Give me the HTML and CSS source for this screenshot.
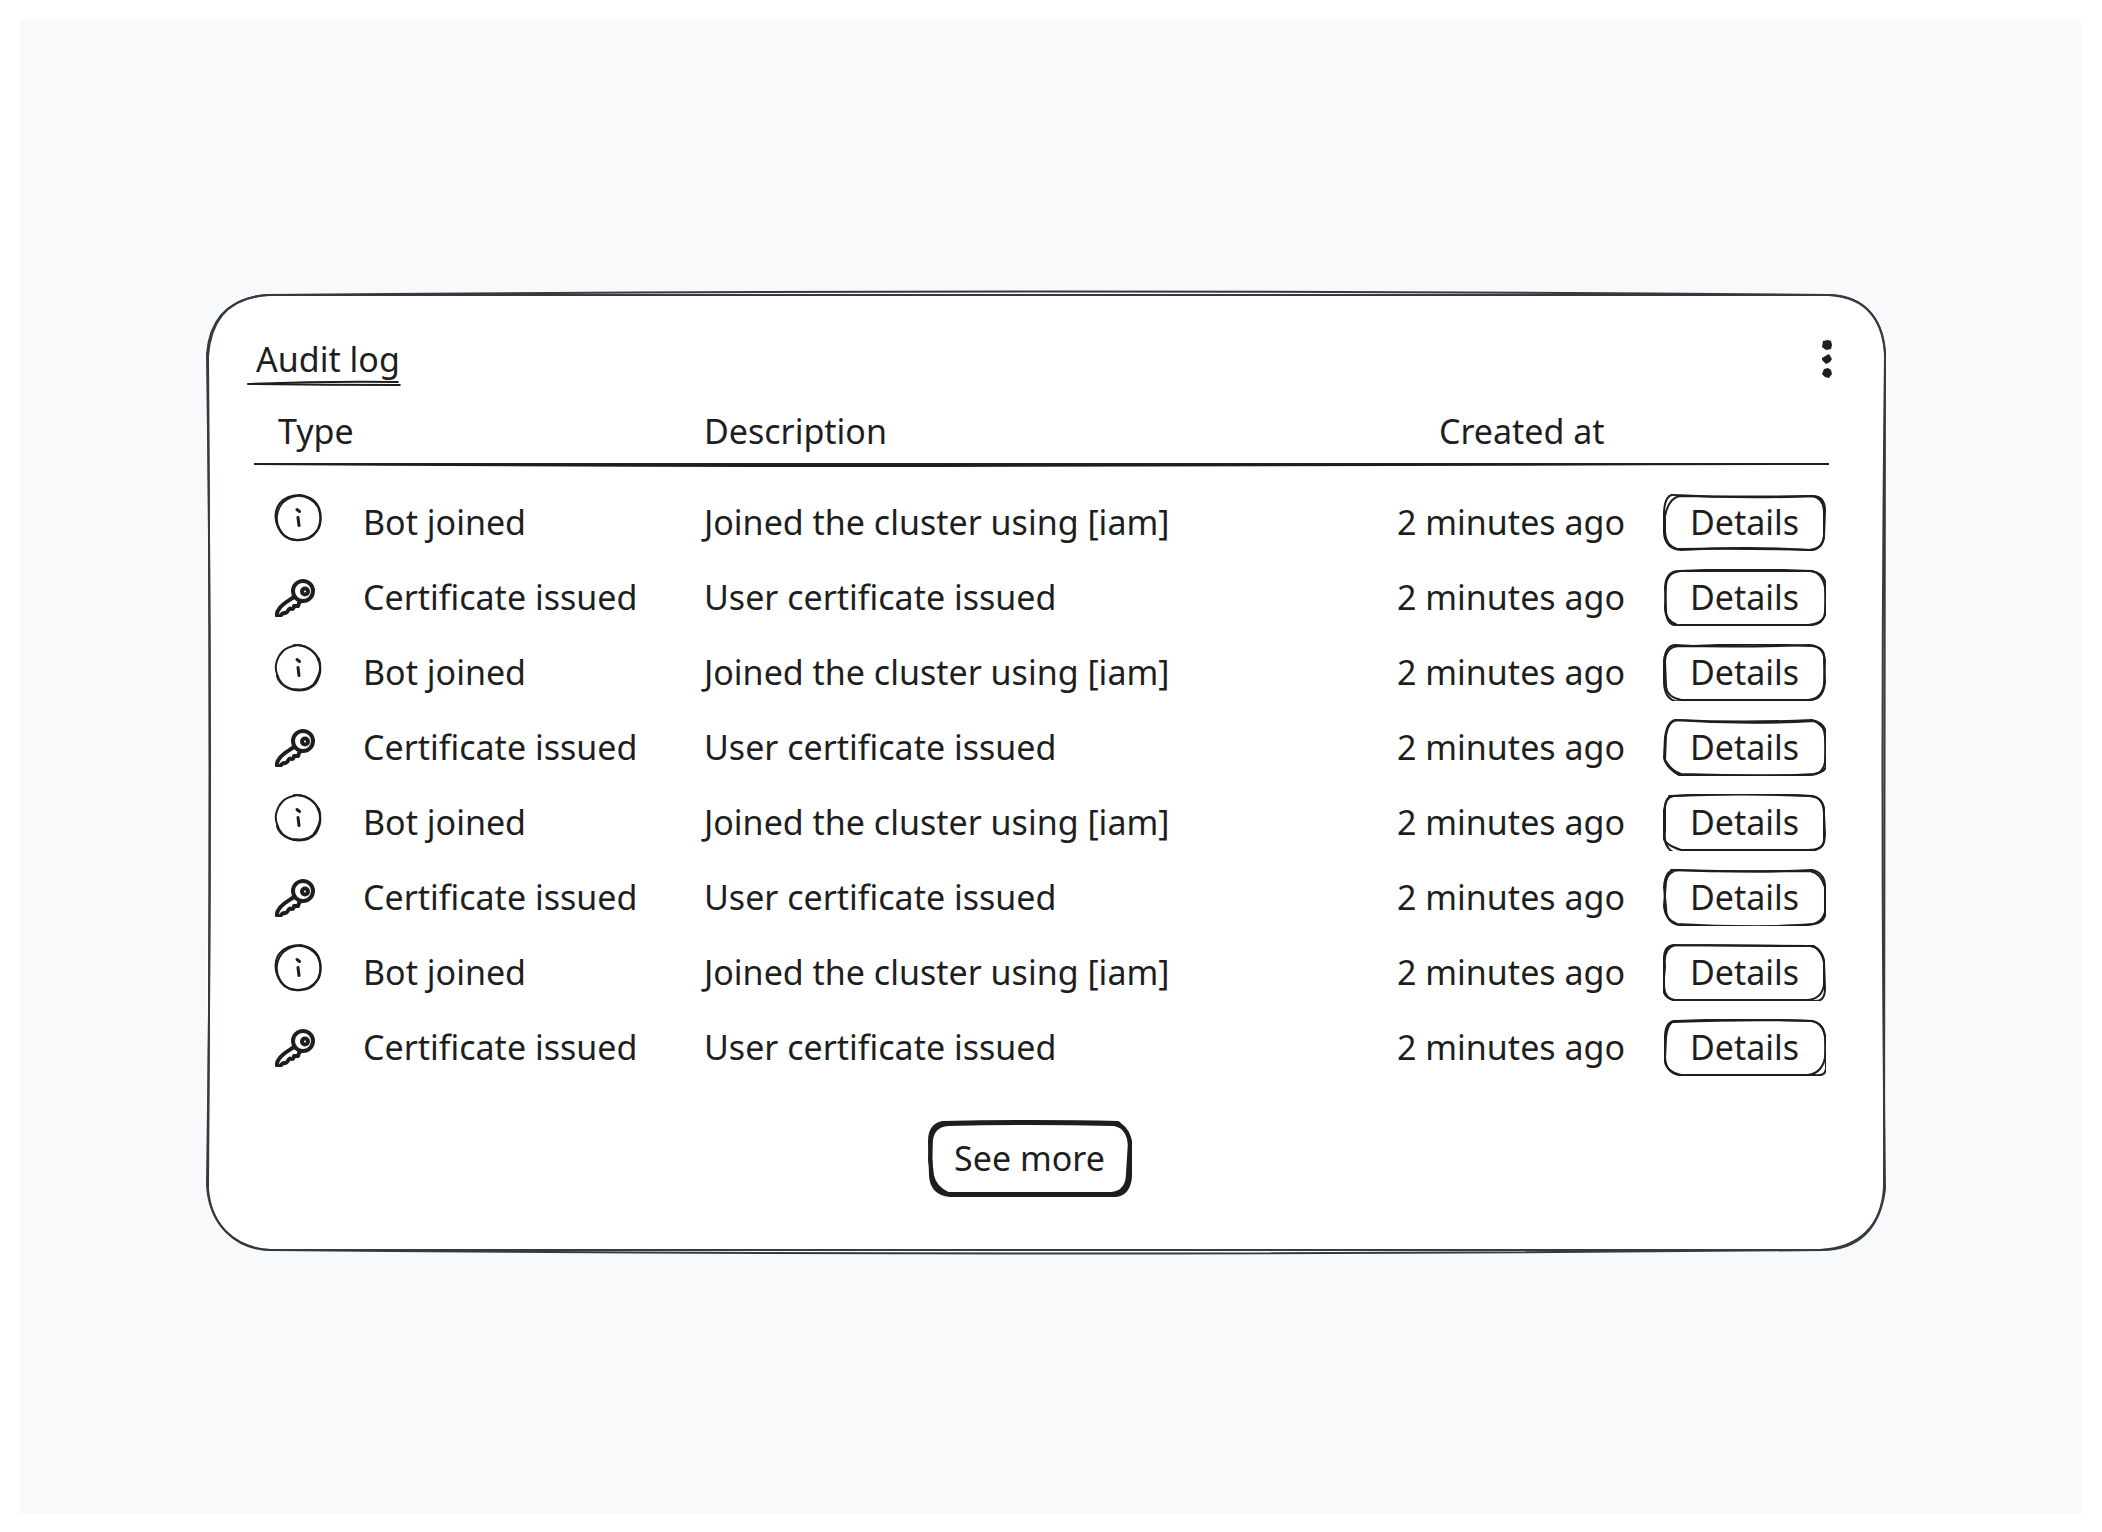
FILE: index.html
```
<!DOCTYPE html>
<html lang="en">
<head>
<meta charset="utf-8">
<meta name="viewport" content="width=device-width, initial-scale=1">
<title>Audit log</title>
<link rel="stylesheet" href="styles.css">
</head>
<body>
<svg class="defs" aria-hidden="true">
  <symbol id="info" viewBox="0 0 48 48">
    <path d="M20 2 C28 0 38 3 43 10 C48 18 48 30 43 37 C38 45 30 47 21 46 C12 45 7 40 4 33 C0 25 1 15 6 9 C11 3 19 1 27 1"/>
    <path d="M22 2 C32 1 40 6 44 13 C47 20 47 28 44 35 C39 43 33 45 24 46 C15 46 9 42 6 36 C1 28 2 18 7 11 C11 5 17 3 22 2"/>
    <path class="thick" d="M23 15.5 L25.5 17.5 M24 23.5 L25 31.5"/>
  </symbol>
  <symbol id="info-2" viewBox="0 0 48 48">
    <path d="M20 1 C30 1 39 5 43 13 C48 22 47 31 42 39 C36 46 27 47 20 46 C11 44 5 38 3 30 C0 22 3 13 9 7 C13 3 18 2 24 1"/>
    <path d="M25 1 C33 2 41 8 45 15 C48 24 45 33 39 41 C33 46 26 46 17 45 C9 42 4 38 3 32"/>
    <path class="thick" d="M23 15.5 L25.5 17.5 M24 23.5 L25 31.5"/>
  </symbol>
  <symbol id="key" viewBox="1 -8 48 48">
    <circle cx="30" cy="14" r="10"/>
    <circle class="eye" cx="32" cy="14.500" r="3"/>
    <path d="M21 20 C15 24 9 27 6 32 C3.500 35 3.500 39 5 41 C8 40 8 36 11 36 C15 37 14 33 17 31.500 C20 33 21 31 21 29 L25 29 C26 28 25 26 27 25"/>
  </symbol>
  <symbol id="box-1" viewBox="0 0 162 56" preserveAspectRatio="none">
    <path d="M12 1 Q80 5 150 2 Q161 3 161 16 L160 42 Q158 55 146 55 Q80 51 18 55 Q2 54 1 38 L1 18 Q2 -1 12 1"/>
    <path d="M16 2 Q80 3 148 2 Q160 4 160 18 L160 40 Q160 54 145 55 Q80 53 14 54 Q3 51 2 38 L2 22 Q5 5 16 2"/>
  </symbol>
  <symbol id="box-2" viewBox="0 0 162 56" preserveAspectRatio="none">
    <path d="M16 2 Q80 -1 148 2 Q162 5 162 18 L161 42 Q160 55 146 55 L18 55 Q3 58 3 40 L2 18 Q3 2 16 2"/>
    <path d="M18 2 Q90 2 146 2 Q158 3 161 18 L162 42 Q160 54 144 55 Q80 59 14 55 Q2 50 2 38 L3 16 Q4 3 18 2"/>
  </symbol>
  <symbol id="box-3" viewBox="0 0 162 56" preserveAspectRatio="none">
    <path d="M12 1 L30 2 Q90 -1 148 2 Q162 3 160 16 L161 38 Q159 55 146 55 Q80 58 12 56 Q1 53 1 36 L1 16 Q3 0 14 1"/>
    <path d="M16 2 Q90 3 146 1 Q159 2 161 16 L160 40 Q158 54 144 55 L18 55 Q4 52 3 42 L2 18 Q2 3 16 2"/>
  </symbol>
  <symbol id="box-4" viewBox="0 0 162 56" preserveAspectRatio="none">
    <path d="M14 1 Q80 4 148 1 Q162 4 162 16 L161 42 Q159 55 146 55 Q80 56 18 54 Q8 51 2 40 L3 16 Q5 2 14 1"/>
    <path d="M12 1 Q80 6 150 2 Q161 6 161 18 L162 46 Q162 52 150 54 Q80 58 16 55 Q3 48 1 38 L2 18 Q4 3 12 1"/>
  </symbol>
  <symbol id="box-5" viewBox="0 0 162 56" preserveAspectRatio="none">
    <path d="M12 2 Q70 -3 148 2 Q160 4 160 20 L161 40 Q161 55 146 56 Q80 54 10 57 Q0 52 2 36 L2 14 Q2 1 12 2"/>
    <path d="M6 2 Q80 -1 144 2 Q158 2 160 14 L160 46 Q160 55 144 55 L18 55 Q2 50 1 44 L1 16 Q3 3 10 2"/>
  </symbol>
  <symbol id="box-6" viewBox="0 0 162 56" preserveAspectRatio="none">
    <path d="M12 1 Q80 4 148 1 Q162 4 161 20 L162 40 Q162 52 150 54 Q80 59 16 55 Q3 53 3 38 L1 18 Q2 1 12 1"/>
    <path d="M8 1 Q80 3 146 2 Q157 4 161 18 L161 42 Q158 54 144 55 Q80 58 14 54 Q2 50 1 36 L3 12 Q5 2 16 1"/>
  </symbol>
  <symbol id="box-7" viewBox="0 0 162 56" preserveAspectRatio="none">
    <path d="M12 1 Q80 2 150 2 Q158 8 160 18 L161 44 Q161 57 150 56 Q80 55 14 56 Q1 54 0 44 L2 22 Q0 4 12 1"/>
    <path d="M10 1 L146 2 Q157 3 160 16 L160 40 Q158 54 144 55 Q80 55 12 55 Q2 54 1 42 L1 18 Q0 2 10 1"/>
  </symbol>
  <symbol id="box-8" viewBox="0 0 162 56" preserveAspectRatio="none">
    <path d="M14 2 Q80 -1 148 2 Q160 4 161 18 L162 48 Q162 57 150 55 Q80 58 16 55 Q3 53 2 38 L3 18 Q5 1 14 2"/>
    <path d="M10 3 Q90 0 148 2 Q160 4 162 22 L161 38 Q158 53 144 55 L18 55 Q3 51 2 42 L2 16 Q3 2 12 2"/>
  </symbol>
</svg>

<main class="canvas">
  <section class="card" aria-labelledby="card-title">
    <svg class="card-frame" viewBox="0 0 1680 958" preserveAspectRatio="none" aria-hidden="true">
      <path class="fill" d="M60 1 Q840 -4 1622 1 Q1679 3 1679 62 L1678 896 Q1674 957 1616 957 Q840 961 60 957 Q0 954 0 892 L1 60 Q4 4 60 1 Z"/>
      <path d="M60 1 Q840 -6 1622 1 C1662 3 1678 28 1679 62 Q1674 480 1679 896 C1674 936 1652 957 1616 957 Q840 964 64 957 C26 955 2 930 0 892 Q6 480 0 60 C3 22 24 4 60 1"/>
      <path d="M64 1 Q840 3 1624 1 C1658 2 1676 24 1679 58 Q1678 480 1678 894 C1676 932 1654 955 1614 957 Q840 954 62 957 C28 956 4 932 1 896 Q4 480 1 62 C4 22 26 2 64 1"/>
    </svg>

    <header class="card-header">
      <h1 class="card-title" id="card-title">Audit log
        <svg class="title-line" viewBox="0 0 150 6" preserveAspectRatio="none" aria-hidden="true">
          <path d="M0 4 Q75 5 150 5"/>
          <path d="M2 4 Q75 1 148 2"/>
        </svg>
      </h1>
      <button class="menu" type="button" aria-label="More options">
        <svg class="menu-dots" viewBox="0 0 12 40" aria-hidden="true">
          <path d="M2 2 L7 1 L10 2 L11 6 L10 10 L5 11 L1 8 Z"/>
          <path d="M1 19 L6 16 L8 15 L11 20 L9 23 L5 25 L1 21 Z"/>
          <path d="M3 30 L7 29 L10 31 L11 35 L8 39 L4 38 L1 35 Z"/>
        </svg>
      </button>
    </header>

    <div class="log">
      <table class="log-table">
        <colgroup>
          <col class="col-icon"><col class="col-type"><col><col class="col-time"><col class="col-action">
        </colgroup>
        <thead>
          <tr>
            <th class="head-type" colspan="2" scope="col">Type</th>
            <th scope="col">Description</th>
            <th class="head-time" scope="col">Created at</th>
            <td></td>
          </tr>
        </thead>
        <tbody>
          <tr>
            <td class="icon-cell"><svg class="icon"><use href="#info"/></svg></td>
            <td>Bot joined</td>
            <td>Joined the cluster using [iam]</td>
            <td>2 minutes ago</td>
            <td><button class="details" type="button"><svg class="sketch"><use href="#box-1"/></svg>Details</button></td>
          </tr>
          <tr>
            <td class="icon-cell"><svg class="icon icon-key"><use href="#key"/></svg></td>
            <td>Certificate issued</td>
            <td>User certificate issued</td>
            <td>2 minutes ago</td>
            <td><button class="details" type="button"><svg class="sketch"><use href="#box-2"/></svg>Details</button></td>
          </tr>
          <tr>
            <td class="icon-cell"><svg class="icon"><use href="#info-2"/></svg></td>
            <td>Bot joined</td>
            <td>Joined the cluster using [iam]</td>
            <td>2 minutes ago</td>
            <td><button class="details" type="button"><svg class="sketch"><use href="#box-3"/></svg>Details</button></td>
          </tr>
          <tr>
            <td class="icon-cell"><svg class="icon icon-key"><use href="#key"/></svg></td>
            <td>Certificate issued</td>
            <td>User certificate issued</td>
            <td>2 minutes ago</td>
            <td><button class="details" type="button"><svg class="sketch"><use href="#box-4"/></svg>Details</button></td>
          </tr>
          <tr>
            <td class="icon-cell"><svg class="icon"><use href="#info-2"/></svg></td>
            <td>Bot joined</td>
            <td>Joined the cluster using [iam]</td>
            <td>2 minutes ago</td>
            <td><button class="details" type="button"><svg class="sketch"><use href="#box-5"/></svg>Details</button></td>
          </tr>
          <tr>
            <td class="icon-cell"><svg class="icon icon-key"><use href="#key"/></svg></td>
            <td>Certificate issued</td>
            <td>User certificate issued</td>
            <td>2 minutes ago</td>
            <td><button class="details" type="button"><svg class="sketch"><use href="#box-6"/></svg>Details</button></td>
          </tr>
          <tr>
            <td class="icon-cell"><svg class="icon"><use href="#info"/></svg></td>
            <td>Bot joined</td>
            <td>Joined the cluster using [iam]</td>
            <td>2 minutes ago</td>
            <td><button class="details" type="button"><svg class="sketch"><use href="#box-7"/></svg>Details</button></td>
          </tr>
          <tr>
            <td class="icon-cell"><svg class="icon icon-key"><use href="#key"/></svg></td>
            <td>Certificate issued</td>
            <td>User certificate issued</td>
            <td>2 minutes ago</td>
            <td><button class="details" type="button"><svg class="sketch"><use href="#box-8"/></svg>Details</button></td>
          </tr>
        </tbody>
      </table>
      <svg class="head-rule" viewBox="0 0 1576 6" preserveAspectRatio="none" aria-hidden="true">
        <path d="M0 1 L300 1 Q788 1 1576 1 L1576 3 Q1100 4 600 5 Q300 5 0 3 Z"/>
      </svg>
    </div>

    <footer class="card-footer">
      <button class="more" type="button">
        <svg class="sketch sketch-bold" viewBox="0 0 204 78" preserveAspectRatio="none" aria-hidden="true">
          <path d="M14 3 Q110 1 190 3 Q202 12 202 26 L202 58 Q200 76 186 76 L22 76 Q4 74 3 56 L2 22 Q2 3 18 3"/>
          <path d="M20 4 Q100 2 186 4 Q199 6 202 22 L200 54 Q200 73 184 75 L20 75 Q6 68 4 56 L2 40 L3 20 Q5 5 20 4"/>
        </svg>
        See more
      </button>
    </footer>
  </section>
</main>
</body>
</html>
```
FILE: styles.css
```
* {
  box-sizing: border-box;
}

body {
  margin: 0;
  padding: 20px 21px 18px 20px;
  background: #ffffff;
  color: #1e1e1e;
  font: 34px/46px "Noto Sans", sans-serif;
}

button {
  padding: 0;
  border: 0;
  background: transparent;
  color: inherit;
  font: inherit;
  cursor: pointer;
}

svg {
  fill: none;
  stroke: #1e1e1e;
  stroke-width: 2px;
  stroke-linecap: round;
  stroke-linejoin: round;
}

.defs {
  position: absolute;
  width: 0;
  height: 0;
}

.canvas {
  display: flex;
  flex-direction: column;
  justify-content: center;
  min-height: calc(100vh - 38px);
  padding: 64px 195px 54px 187px;
  background: #f8f9fb;
}

.card {
  position: relative;
  isolation: isolate;
  padding: 42px 57px 54px 47px;
}

.card-frame {
  position: absolute;
  z-index: -1;
  inset: 0;
  width: 100%;
  height: 100%;
  overflow: visible;
  stroke: #343a40;
}

.card-frame path {
  vector-effect: non-scaling-stroke;
}

.card-frame .fill {
  fill: #ffffff;
  stroke: none;
}

.card-header {
  display: flex;
  align-items: flex-start;
  justify-content: space-between;
  margin: 0 -4px 0 -6px;
}

.card-title {
  position: relative;
  margin: 0;
  padding-left: 8px;
  font-size: 34px;
  font-weight: 400;
}

.title-line {
  position: absolute;
  left: 0;
  bottom: -4px;
  width: 100%;
  height: 6px;
  overflow: visible;
}

.menu {
  display: flex;
  padding: 3px 0;
}

.menu-dots {
  width: 12px;
  height: 40px;
  fill: #1e1e1e;
  stroke: none;
}

.log {
  position: relative;
}

.log-table {
  width: 100%;
  border-collapse: collapse;
  table-layout: fixed;
}

.col-icon {
  width: 109px;
}

.col-type {
  width: 341px;
}

.col-time {
  width: 266px;
}

.col-action {
  width: 166px;
}

.log-table th,
.log-table td {
  height: 75px;
  padding: 0;
  font-weight: 400;
  text-align: left;
  vertical-align: middle;
  white-space: nowrap;
}

.log-table thead th,
.log-table thead td {
  height: 103px;
  padding-bottom: 4px;
}

.log-table .head-type {
  padding-left: 24px;
}

.log-table .head-time {
  padding-left: 42px;
}

.log-table .icon-cell {
  padding: 0 0 8px 20px;
}

.icon {
  display: block;
  width: 48px;
  height: 48px;
  overflow: visible;
}

.thick {
  stroke-width: 3px;
}

.icon-key {
  stroke-width: 4px;
}

.eye {
  stroke-width: 4px;
}

.head-rule {
  position: absolute;
  left: 0;
  top: 80px;
  width: 100%;
  height: 6px;
  fill: #1e1e1e;
  stroke: none;
}

.details,
.more {
  position: relative;
  display: block;
}

.details {
  width: 163px;
  height: 57px;
}

.more {
  width: 204px;
  height: 77px;
}

.sketch {
  position: absolute;
  inset: 0;
  width: 100%;
  height: 100%;
  overflow: visible;
}

.sketch-bold {
  stroke-width: 4px;
}

.card-footer {
  display: flex;
  justify-content: center;
  padding: 35px 24px 0 0;
}
```
